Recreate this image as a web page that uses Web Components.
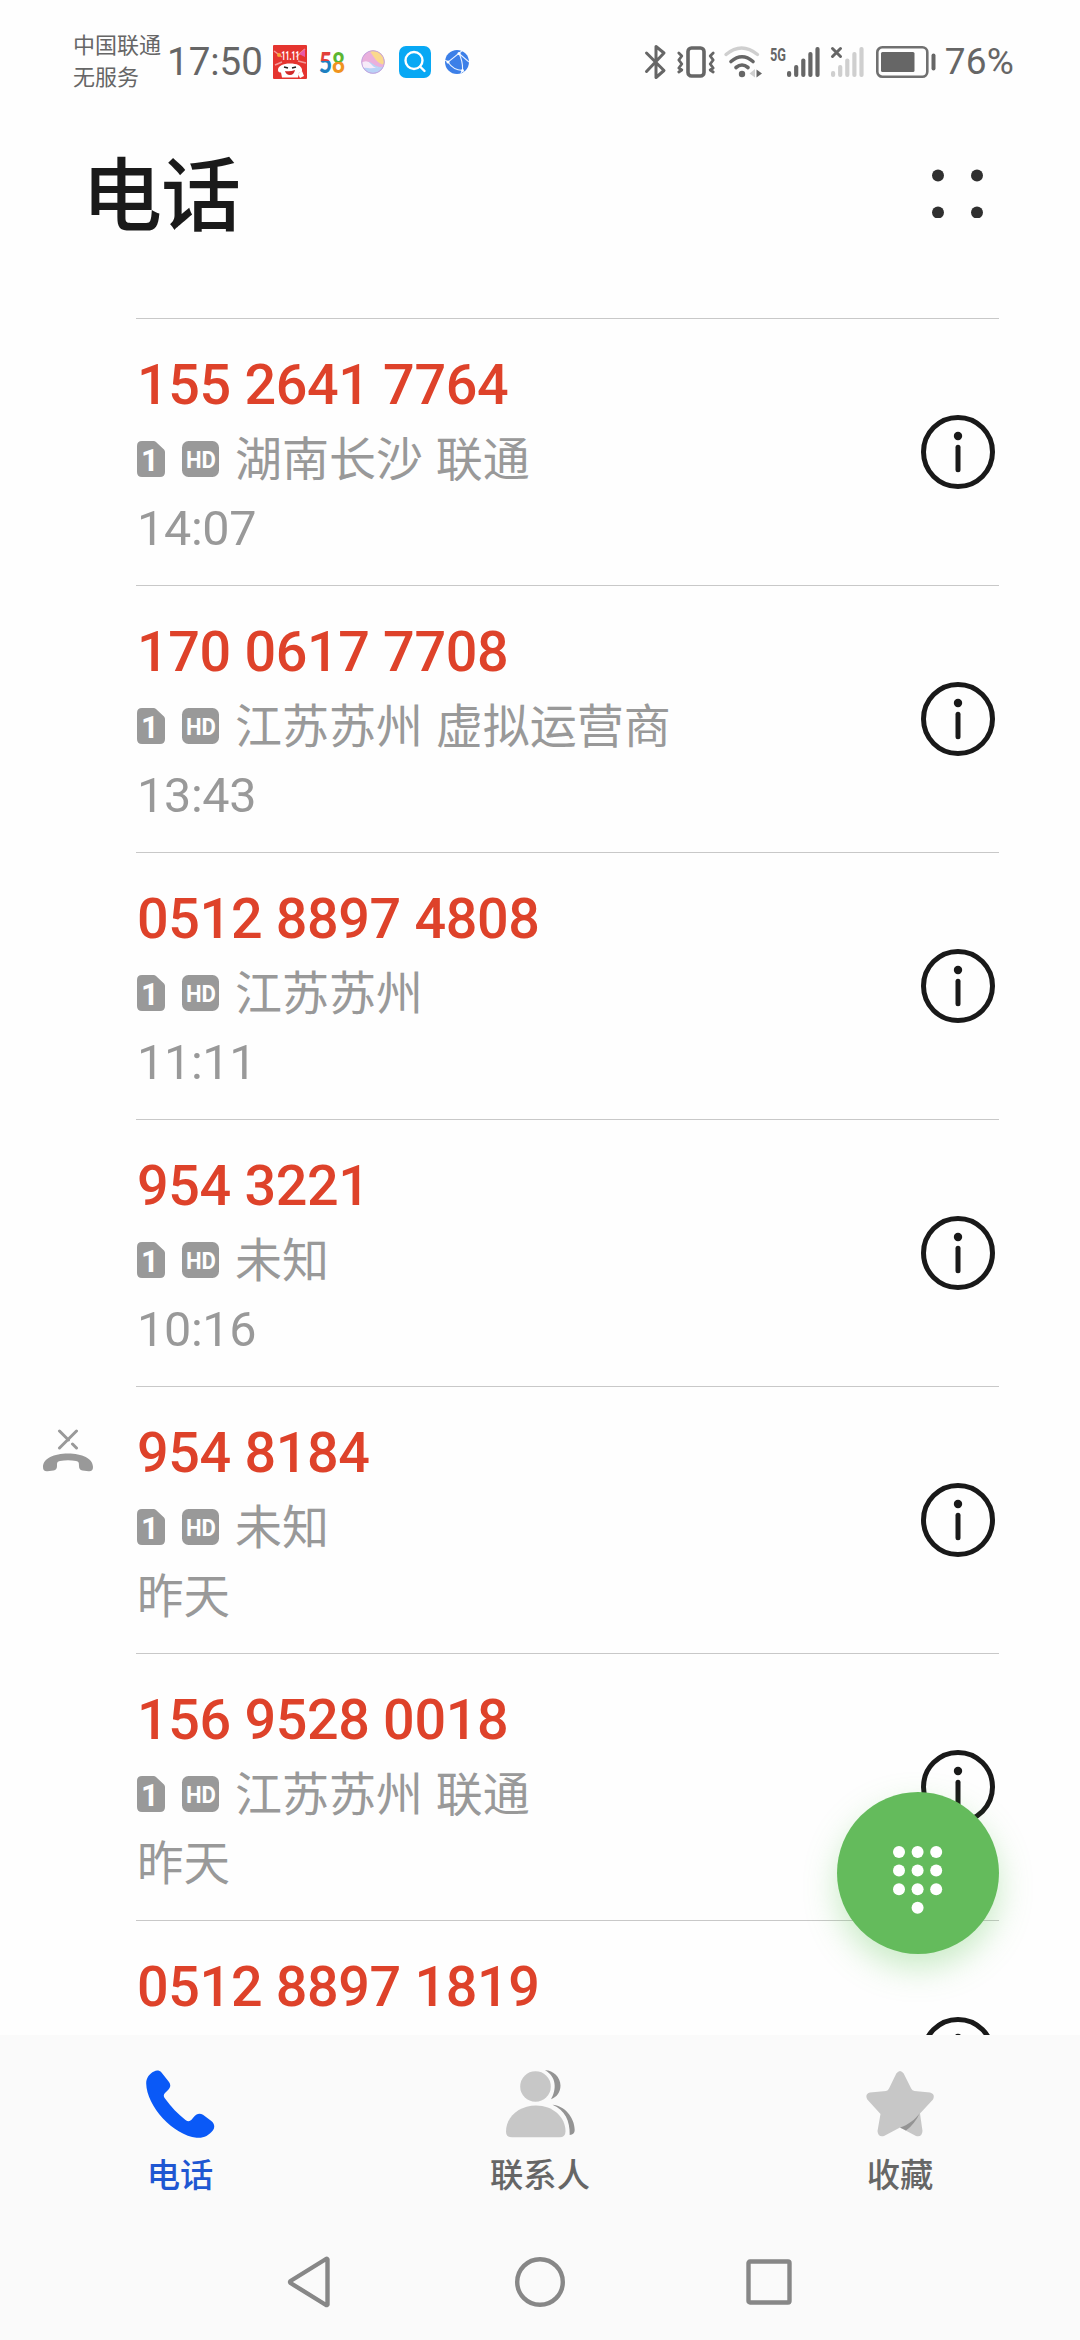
<!DOCTYPE html>
<html lang="zh-CN">
<head>
<meta charset="utf-8">
<title>电话</title>
<style>
  body {
    margin: 0;
    background: #fefefe;
    font-family: Roboto, "Noto Sans CJK SC", sans-serif;
  }
</style>
</head>
<body>
<phone-screen>
  <status-bar slot="status" time="17:50" battery="76">
    <span slot="carrier">中国联通</span>
    <span slot="carrier">无服务</span>
  </status-bar>
  <app-header slot="header">电话</app-header>

  <call-row number="155 2641 7764" time="14:07">湖南长沙 联通</call-row>
  <call-row number="170 0617 7708" time="13:43">江苏苏州 虚拟运营商</call-row>
  <call-row number="0512 8897 4808" time="11:11">江苏苏州</call-row>
  <call-row number="954 3221" time="10:16">未知</call-row>
  <call-row number="954 8184" time="昨天" rejected>未知</call-row>
  <call-row number="156 9528 0018" time="昨天">江苏苏州 联通</call-row>
  <call-row number="0512 8897 1819"></call-row>

  <dial-button slot="fab"></dial-button>

  <tab-item slot="tabs" icon="phone" active>电话</tab-item>
  <tab-item slot="tabs" icon="people">联系人</tab-item>
  <tab-item slot="tabs" icon="star">收藏</tab-item>

  <system-nav slot="nav"></system-nav>
</phone-screen>

<script>
class PhoneScreen extends HTMLElement {
  connectedCallback() {
    this.attachShadow({ mode: 'open' }).innerHTML = `
      <style>
        :host {
          display: flex;
          flex-direction: column;
          position: relative;
          width: 1080px;
          height: 2340px;
          overflow: hidden;
          background: #fefefe;
        }
        main { flex: 1; min-height: 0; overflow: hidden; }
        footer { background: #fafafa; }
        .tabs { display: grid; grid-template-columns: repeat(3, 1fr); height: 189px; }
        ::slotted([slot="fab"]) { position: absolute; left: 837px; top: 1792px; }
      </style>
      <slot name="status"></slot>
      <slot name="header"></slot>
      <main><slot></slot></main>
      <slot name="fab"></slot>
      <footer>
        <div class="tabs"><slot name="tabs"></slot></div>
        <slot name="nav"></slot>
      </footer>
    `;
  }
}
customElements.define('phone-screen', PhoneScreen);

class StatusBar extends HTMLElement {
  // Five signal bars, growing to the right.
  bars(color) {
    return [6, 12, 18.5, 25, 30].map((h, i) =>
      `<rect x="${i * 7.1}" y="${30 - h}" width="4.2" height="${h}" rx="2" fill="${color}"/>`
    ).join('');
  }

  connectedCallback() {
    this.attachShadow({ mode: 'open' }).innerHTML = `
      <style>
        :host {
          display: flex;
          justify-content: space-between;
          height: 82px;
          padding: 0 66px 0 73px;
          box-sizing: border-box;
          color: #666;
        }
        .side { display: flex; align-items: center; height: 123px; }
        .carrier { display: flex; flex-direction: column; flex: none; width: 88px; font-size: 22px; line-height: 32px; }
        .time { flex: none; width: 104px; margin-left: 6px; font-size: 38.500px; white-space: nowrap; }
        .battery { font-size: 37px; margin-left: 9px; letter-spacing: 0.2px; }
        svg { display: block; flex: none; overflow: visible; }
      </style>
      <div class="side">
        <div class="carrier"><slot name="carrier"></slot></div>
        <div class="time">${this.getAttribute('time')}</div>
        <svg width="34" height="34" viewBox="0 0 34 34" style="margin-left:2px">
          <rect width="34" height="34" rx="1" fill="#e5342f"/>
          <path d="M1 6l8 6M32 4l-9 8M2 20l7-3M33 18l-8-2" stroke="#f39a9a" stroke-width="1.5"/>
          <circle cx="6" cy="10" r="2" fill="#f6a63a"/>
          <path d="M26 9l6-5v8z" fill="#e85aa8"/>
          <text x="17.500" y="15" text-anchor="middle" font-family="Roboto, sans-serif" font-weight="700" font-size="12" textLength="18" lengthAdjust="spacingAndGlyphs" fill="#fff">11.11</text>
          <path d="M5 25c0-4 5-6.500 12-6.500s11 2 12 6c.5 3-2 4-3 3l-1 5H9l-1-5c-2 .5-3-1-3-2.500z" fill="#fff"/>
          <path d="M11 22l4 1M19 23l4-1" stroke="#222" stroke-width="1.600"/>
          <path d="M12 26q5 1 10-1-1 5-5 5t-5-4z" fill="#d12a2a"/>
          <path d="M25 29l4-3 2 5-4 2z" fill="#fff"/>
        </svg>
        <svg width="28" height="26" viewBox="0 0 28 26" style="margin-left:11px">
          <defs>
            <linearGradient id="five" gradientUnits="userSpaceOnUse" x1="0" y1="0" x2="0" y2="26">
              <stop offset=".45" stop-color="#e2403a"/><stop offset=".45" stop-color="#1e7fc0"/>
            </linearGradient>
            <linearGradient id="eight" gradientUnits="userSpaceOnUse" x1="0" y1="0" x2="0" y2="26">
              <stop offset=".49" stop-color="#5cb531"/><stop offset=".49" stop-color="#f0931e"/>
            </linearGradient>
          </defs>
          <text x="1" y="23.500" font-family="Lato, sans-serif" font-weight="900" font-size="29" textLength="26" lengthAdjust="spacingAndGlyphs"><tspan fill="url(#five)">5</tspan><tspan fill="url(#eight)">8</tspan></text>
        </svg>
        <svg width="24" height="24" viewBox="0 0 24 24" style="margin-left:15px">
          <defs><clipPath id="orb"><circle cx="12" cy="12" r="11.500"/></clipPath></defs>
          <g clip-path="url(#orb)">
            <rect width="24" height="24" fill="#eab0dc"/>
            <path d="M8 0h16v15q-6-1-9-5T8 0z" fill="#fbd98d"/>
            <path d="M0 15q6-6 12-1t12 2v9H0z" fill="#b9d3f6"/>
            <path d="M0 13q6-4 10 1t7 3q-6 2-10 1t-7 1z" fill="#f7eaf8"/>
          </g>
          <circle cx="12" cy="12" r="11.300" fill="none" stroke="#c3a5e0" stroke-width="1"/>
        </svg>
        <svg width="32" height="32" viewBox="0 0 32 32" style="margin-left:14px">
          <rect width="32" height="32" rx="7" fill="#08a8f4"/>
          <circle cx="15" cy="14.500" r="8.500" fill="none" stroke="#fff" stroke-width="2.400"/>
          <path d="M21 20.500l4.500 4.500" stroke="#fff" stroke-width="2.400" stroke-linecap="round"/>
        </svg>
        <svg width="24" height="24" viewBox="0 0 24 24" style="margin-left:14px">
          <defs><clipPath id="globe"><circle cx="12" cy="12" r="12"/></clipPath></defs>
          <circle cx="12" cy="12" r="12" fill="#3c7fe8"/>
          <g clip-path="url(#globe)" fill="none" stroke="#e8f1ff" stroke-width="1.100">
            <path d="M18 0L3 12q5 8 14.500 8.500M14 3.500q4 8 3.500 17L15 25M3 12L0 10M14 3.500L24 12"/>
          </g>
          <g fill="#fff"><circle cx="14" cy="3.500" r="1.500"/><circle cx="3" cy="12" r="1.500"/><circle cx="17.500" cy="20.500" r="1.500"/></g>
        </svg>
      </div>
      <div class="side">
        <svg width="21" height="34" viewBox="0 0 21 34" fill="none" stroke="#666" stroke-width="3" stroke-linecap="round" stroke-linejoin="round">
          <path d="M1.500 8l17.500 17.500-8 7V1.500l8 6.500L1.500 26.500"/>
        </svg>
        <svg width="38" height="32" viewBox="0 0 38 32" fill="none" stroke="#666" stroke-linecap="round" stroke-linejoin="round" style="margin-left:11px">
          <rect x="11" y="2" width="16" height="28" rx="3.500" stroke-width="3.600"/>
          <path d="M1.800 7l3 3-3 4 3 4-3 4 3 2-3 2M36.200 7l-3 3 3 4-3 4 3 4-3 2 3 2" stroke-width="2.800"/>
        </svg>
        <svg width="38" height="32" viewBox="0 0 38 32" fill="none" stroke-linecap="round" style="margin-left:9px">
          <path d="M2 8.500q15.500-13 31.500 0" stroke="#cfcfcf" stroke-width="3.400"/>
          <path d="M7 15.500q11-9.500 22 0" stroke="#666" stroke-width="3.600"/>
          <path d="M12 21.500q6-5 12 0" stroke="#666" stroke-width="3.600"/>
          <circle cx="18" cy="28" r="3.200" fill="#666"/>
          <path d="M31 23v8.500l-5.500-4z" fill="#cfcfcf"/>
          <path d="M32.500 23.500v8l5.500-4z" fill="#666"/>
        </svg>
        <svg width="50" height="30" viewBox="0 0 50 30" style="margin-left:8px">
          <text x="0" y="13.500" font-family="Roboto, sans-serif" font-weight="700" font-size="18.500" textLength="16" lengthAdjust="spacingAndGlyphs" fill="#666">5G</text>
          <g transform="translate(17 0)">${this.bars('#666')}</g>
        </svg>
        <svg width="33" height="30" viewBox="0 0 33 30" style="margin-left:11px">
          ${this.bars('#cfcfcf')}
          <path d="M1.500 1.500l8 8M9.500 1.500l-8 8" stroke="#666" stroke-width="3" stroke-linecap="round"/>
        </svg>
        <svg width="60" height="32" viewBox="0 0 60 32" style="margin-left:12px">
          <rect x="1.300" y="1.300" width="50" height="29.400" rx="5" fill="none" stroke="#707070" stroke-width="2.600"/>
          <rect x="5" y="6" width="33.500" height="20" rx="1.500" fill="#666"/>
          <rect x="55.500" y="7.500" width="4" height="17" rx="2" fill="#666"/>
        </svg>
        <div class="battery">${this.getAttribute('battery')}%</div>
      </div>
    `;
  }
}
customElements.define('status-bar', StatusBar);

class AppHeader extends HTMLElement {
  connectedCallback() {
    this.attachShadow({ mode: 'open' }).innerHTML = `
      <style>
        :host {
          display: flex;
          align-items: center;
          justify-content: space-between;
          height: 236px;
          box-sizing: border-box;
          padding: 0 97px 14px 82px;
        }
        h1 {
          margin: 0;
          padding-top: 7px;
          font-size: 80px;
          font-weight: 500;
          line-height: 100px;
          letter-spacing: -1px;
          color: #1a1a1a;
        }
      </style>
      <h1><slot></slot></h1>
      <svg width="51" height="49" viewBox="0 0 51 49" fill="#303030">
        <circle cx="6" cy="6.500" r="6"/><circle cx="45" cy="6.500" r="6"/>
        <circle cx="6" cy="43.500" r="6"/><circle cx="45" cy="43.500" r="6"/>
      </svg>
    `;
  }
}
customElements.define('app-header', AppHeader);

class CallRow extends HTMLElement {
  // SIM and HD badges, the slotted place, then the time of the call.
  details(time) {
    return `
      <div class="place">
        <svg width="28" height="36" viewBox="0 0 28 36">
          <path d="M5 0h11.500q1.500 0 2.500 1l8 7.500q1 1 1 2.500v20q0 5-5 5H5q-5 0-5-5V5q0-5 5-5z" fill="#999"/>
          <text x="13" y="30" text-anchor="middle" font-family="Roboto, sans-serif" font-weight="700" font-size="31" fill="#fff">1</text>
        </svg>
        <svg width="37" height="36" viewBox="0 0 37 36">
          <rect width="37" height="36" rx="6.500" fill="#999"/>
          <text x="19" y="27" text-anchor="middle" font-family="Roboto, sans-serif" font-weight="700" font-size="24" textLength="30" lengthAdjust="spacingAndGlyphs" fill="#fff">HD</text>
        </svg>
        <span><slot></slot></span>
      </div>
      <div class="time${time.includes(':') ? '' : ' text'}">${time}</div>
    `;
  }

  connectedCallback() {
    const time = this.getAttribute('time');
    const rejected = this.hasAttribute('rejected') ? `
      <svg width="52" height="44" viewBox="0 0 52 44">
        <path d="M17.500 2l9 9M30.500 15l4 4M34.500 2l-17 17" stroke="#999" stroke-width="3" stroke-linecap="round"/>
        <path d="M26 24.500C12 24.500 1 29.500 1 38c0 3.500 1.500 4.500 4.500 4.300l6-.8c2.500-.4 3.500-1.800 3.500-4.500 0-4 .5-4.500 3-5 5-.9 11-.9 16 0 2.500.5 3 1 3 5 0 2.700 1 4.100 3.500 4.500l6 .8c3 .2 4.500-.8 4.500-4.300 0-8.500-11-13.500-25-13.500z" fill="#999"/>
      </svg>` : '';

    this.attachShadow({ mode: 'open' }).innerHTML = `
      <style>
        :host {
          display: grid;
          grid-template-columns: 136px 1fr;
          height: 267px;
        }
        aside { padding: 43px 0 0 42px; }
        section {
          display: flex;
          align-items: center;
          justify-content: space-between;
          margin-right: 81px;
          padding-right: 4px;
          border-top: 1px solid #c8c8c8;
        }
        .text-block { height: 216px; padding-top: 3px; }
        .number {
          font-size: 55.700px;
          font-weight: 500;
          line-height: 78px;
          letter-spacing: -0.35px;
          color: #de422a;
        }
        .place {
          display: flex;
          align-items: center;
          height: 70px;
          font-size: 47px;
          line-height: 70px;
          color: #999;
        }
        .place svg { overflow: visible; margin-left: 1px; margin-right: 16px; }
        .place span { white-space: pre; padding-top: 2px; word-spacing: 1px; }
        .time {
          font-size: 48.500px;
          line-height: 69px;
          letter-spacing: -0.3px;
          color: #999;
        }
        .time.text { font-size: 46.500px; letter-spacing: 0; line-height: 71px; }
        .number, .time { padding-left: 1px; }
      </style>
      <aside>${rejected}</aside>
      <section>
        <div class="text-block">
          <div class="number">${this.getAttribute('number')}</div>
          ${time ? this.details(time) : ''}
        </div>
        <svg width="74" height="74" viewBox="0 0 74 74">
          <circle cx="37" cy="37" r="34.500" fill="none" stroke="#191919" stroke-width="5"/>
          <circle cx="37" cy="21" r="4.200" fill="#191919"/>
          <path d="M37 32.300v22.500" stroke="#191919" stroke-width="5" stroke-linecap="round"/>
        </svg>
      </section>
    `;
  }
}
customElements.define('call-row', CallRow);

class DialButton extends HTMLElement {
  connectedCallback() {
    let dots = '';
    for (let row = 0; row < 4; row++) {
      for (let col = 0; col < 3; col++) {
        if (row === 3 && col !== 1) continue;
        dots += `<circle cx="${6 + col * 18.6}" cy="${6 + row * 18.6}" r="6"/>`;
      }
    }

    this.attachShadow({ mode: 'open' }).innerHTML = `
      <style>
        :host {
          display: flex;
          align-items: center;
          justify-content: center;
          width: 162px;
          height: 162px;
          border-radius: 50%;
          background: #64bb5c;
          box-shadow: 0 14px 32px rgba(100, 200, 92, 0.34);
        }
        svg { margin-top: 14px; }
      </style>
      <svg width="49.200" height="67.800" viewBox="0 0 49.2 67.8" fill="#fff">${dots}</svg>
    `;
  }
}
customElements.define('dial-button', DialButton);

const TAB_ICONS = {
  phone: `
    <path d="M8 1.500C10.500 0 13.500.3 15.500 2.500L23 12c2 2.800 1.500 5.500-.5 7.500l-3.500 3.500c-1.700 1.800-1.500 3 0 5.500C25 37 32 44 39.500 50c2.500 1.800 4.200 1.600 6-.2l2.500-3c2.500-3 5.500-4 9-2l8 6c3.800 3 4 6.500 2 9.500C62.500 66 57 68.500 50.500 67.700 28 65.500.5 36.500.2 13.500.1 8 3.500 3.500 8 1.500z" fill="#0a59f7"/>`,
  people: `
    <circle cx="29.500" cy="16.500" r="15.300" fill="#c7c7c7"/>
    <path d="M30 35.500c17 0 29.500 11.500 29.500 26q0 5.800-6 5.800H6q-6 0-6-5.800C0 47 13 35.500 30 35.500z" fill="#c7c7c7"/>
    <path d="M39 .2C47 0 54.500 7 54.500 15.500 54.500 22 51 27 45 29.300 50.500 20 51 6.500 39 .2zM46.500 34.800C58 35.500 68.500 47 68.700 60q0 4.500-5 5C64 51 59 40 46.500 34.800z" fill="#949494"/>`,
  star: `
    <path d="M30.300 3.500q3.700-5 7.400 0l7.500 15q1 2.300 3.300 2.500l15.500 1.600q5.500 1.500 3 6.800L54 43.500 56.500 61q-.5 6.500-6.500 5L34 57.500 18 66q-6 1.500-6.500-5L14.500 44 1.300 29.500q-2.800-5.500 2.700-6.900L20 21q2-.3 3-2.500z" fill="#c7c7c7"/>
    <path d="M53.800 43.200C49 49.500 42 55 34 57.500l6 3.100C46 56 50.500 50 53.800 43.200z" fill="#949494"/>`,
};

class TabItem extends HTMLElement {
  connectedCallback() {
    this.attachShadow({ mode: 'open' }).innerHTML = `
      <style>
        :host {
          display: flex;
          flex-direction: column;
          align-items: center;
          padding-top: 35px;
          font-size: 33.300px;
          font-weight: 500;
          line-height: 44px;
          color: #666;
        }
        :host([active]) { color: #1f57d2; }
        svg { margin-bottom: 16px; }
      </style>
      <svg width="69" height="68" viewBox="0 0 69 68">${TAB_ICONS[this.getAttribute('icon')]}</svg>
      <slot></slot>
    `;
  }
}
customElements.define('tab-item', TabItem);

class SystemNav extends HTMLElement {
  connectedCallback() {
    this.attachShadow({ mode: 'open' }).innerHTML = `
      <style>
        :host {
          display: flex;
          align-items: center;
          justify-content: space-between;
          height: 116px;
          padding: 0 287px;
        }
      </style>
      <svg width="48" height="52" viewBox="0 0 48 52" fill="none" stroke="#878787" stroke-width="4.400" stroke-linejoin="round">
        <path d="M40.500 3.500v45q-.5 1-1.500.5L3.500 27q-1-1 0-2L39 3q1-.5 1.500.5z"/>
      </svg>
      <svg width="52" height="52" viewBox="0 0 52 52" fill="none" stroke="#878787" stroke-width="4.400">
        <circle cx="26" cy="26" r="22.800"/>
      </svg>
      <svg width="48" height="52" viewBox="0 0 48 52" fill="none" stroke="#878787" stroke-width="4.400">
        <rect x="3.500" y="5.500" width="41" height="41" rx="1.500"/>
      </svg>
    `;
  }
}
customElements.define('system-nav', SystemNav);
</script>
</body>
</html>
